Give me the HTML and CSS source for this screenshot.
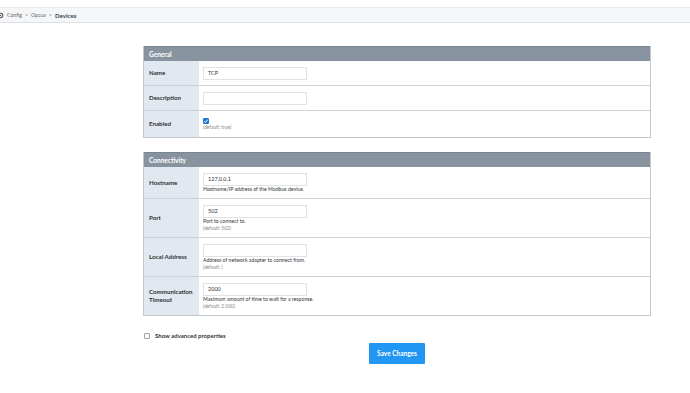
FILE: index.html
```html
<!DOCTYPE html>
<html>
<head>
<meta charset="utf-8">
<link rel="stylesheet" href="styles.css">
</head>
<body>
<div class="crumbs">
  <svg class="gear" width="7" height="7" viewBox="0 0 10 10"><circle cx="5" cy="5" r="3.2" fill="none" stroke="#555" stroke-width="1.6"/><circle cx="5" cy="5" r="1" fill="#555"/></svg>
  <span class="crumb">Config</span>
  <span class="sep">&gt;</span>
  <span class="crumb">Opcua</span>
  <span class="sep">&gt;</span>
  <span class="crumb current">Devices</span>
</div>

<div class="main">
  <div class="panel">
    <div class="panel-head">General</div>
    <div class="row r-name">
      <div class="label">Name</div>
      <div class="value"><div class="input">TCP</div></div>
    </div>
    <div class="row r-desc">
      <div class="label">Description</div>
      <div class="value"><div class="input"></div></div>
    </div>
    <div class="row r-enabled">
      <div class="label">Enabled</div>
      <div class="value">
        <span class="check on"><svg width="6" height="6" viewBox="0 0 6 6"><path d="M1.2 3.2 L2.5 4.4 L4.8 1.6" fill="none" stroke="#fff" stroke-width="1"/></svg></span>
        <div class="default">(default: true)</div>
      </div>
    </div>
  </div>

  <div class="panel second">
    <div class="panel-head">Connectivity</div>
    <div class="row r-host">
      <div class="label">Hostname</div>
      <div class="value"><div class="input">127.0.0.1</div><div class="help">Hostname/IP address of the Modbus device.</div></div>
    </div>
    <div class="row r-port">
      <div class="label">Port</div>
      <div class="value"><div class="input">502</div><div class="help">Port to connect to.</div><div class="default">(default: 502)</div></div>
    </div>
    <div class="row r-local">
      <div class="label">Local Address</div>
      <div class="value"><div class="input"></div><div class="help">Address of network adapter to connect from.</div><div class="default">(default: )</div></div>
    </div>
    <div class="row r-timeout">
      <div class="label">Communication<br>Timeout</div>
      <div class="value"><div class="input">2000</div><div class="help">Maximum amount of time to wait for a response.</div><div class="default">(default: 2 000)</div></div>
    </div>
  </div>

  <div class="advanced"><span class="check"></span><span>Show advanced properties</span></div>
  <div class="actions"><button class="save">Save Changes</button></div>
</div>
</body>
</html>
```
FILE: styles.css
```css
html, body {
  margin: 0;
  padding: 0;
  background: #fff;
  font-family: Lato, "Liberation Sans", sans-serif;
  color: #333;
}
.crumbs {
  margin-top: 7px;
  height: 16px;
  background: #f4f6f8;
  border-top: 1px solid #e8ebee;
  border-bottom: 1px solid #dde1e5;
  box-sizing: border-box;
  display: flex;
  align-items: center;
  gap: 3px;
  font-size: 5.2px;
  color: #666;
}
.gear { margin-left: -3px; }
.crumb.current { font-weight: bold; font-size: 6.2px; color: #3c4a58; }
.sep { color: #777; }
.main {
  width: 508px;
  margin-left: 143px;
  margin-top: 23px;
}
.panel {
  border: 1px solid #c3c8ce;
  border-top: none;
}
.panel.second { margin-top: 14px; }
.panel-head {
  background: #87939e;
  color: #fff;
  font-weight: bold;
  font-size: 6.5px;
  height: 15px;
  line-height: 15px;
  padding-left: 5px;
  border-top: 1px solid #79858f;
  box-sizing: border-box;
}
.row {
  display: grid;
  grid-template-columns: 55px 1fr;
  border-top: 1px solid #cdd2d7;
}
.panel-head + .row { border-top: none; }
.label {
  background: #e2e8ef;
  font-weight: bold;
  font-size: 6.2px;
  color: #2e3338;
  padding-left: 5px;
  display: flex;
  align-items: center;
  line-height: 8px;
}
.value {
  padding: 6px 5px 5px 4px;
  background: #fff;
}
.r-enabled .value { padding-top: 7px; padding-bottom: 6px; }
.input {
  width: 104px;
  height: 13px;
  box-sizing: border-box;
  border: 1px solid #dfe3e7;
  font-size: 5.5px;
  line-height: 11px;
  padding-left: 4px;
  color: #333;
}
.help {
  font-size: 5.2px;
  line-height: 7px;
  color: #333;
}
.default {
  font-size: 4.8px;
  line-height: 7px;
  color: #888;
}
.check {
  display: inline-block;
  width: 6px;
  height: 6px;
  box-sizing: border-box;
  border: 1px solid #9aa1a8;
  border-radius: 1px;
  vertical-align: middle;
}
.check.on {
  background: #1976d2;
  border-color: #1976d2;
  display: block;
}
.check.on svg { display: block; margin: -1px 0 0 -1px; }
.advanced {
  margin-top: 16px;
  display: flex;
  align-items: center;
  gap: 5px;
  font-size: 6px;
  font-weight: bold;
  color: #333;
  padding-left: 1px;
}
.actions {
  display: flex;
  justify-content: center;
  margin-top: 4px;
}
.save {
  width: 56px;
  height: 21px;
  background: #2196f3;
  border: none;
  border-radius: 1px;
  color: #fff;
  font-family: Lato, "Liberation Sans", sans-serif;
  font-weight: bold;
  font-size: 6.5px;
  padding: 0;
}
```
